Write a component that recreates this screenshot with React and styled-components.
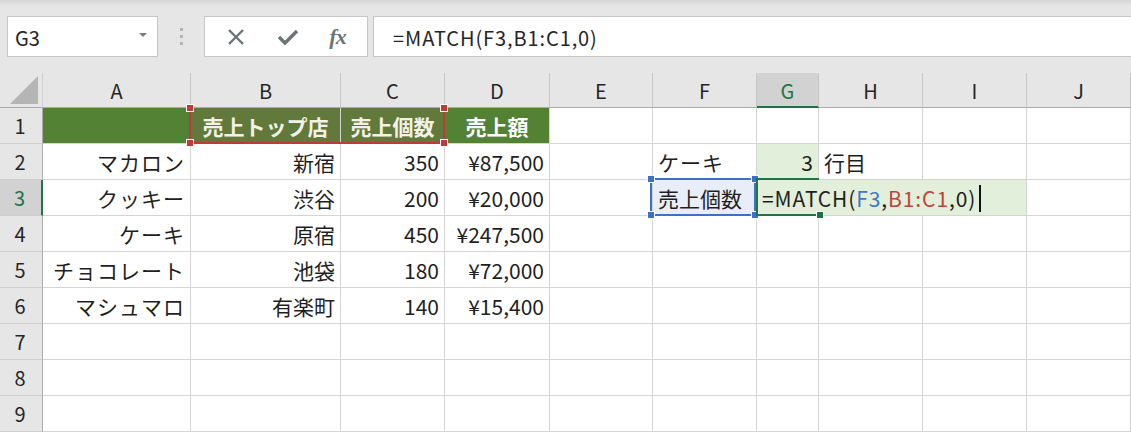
import React from "react";
import styled, { createGlobalStyle } from "styled-components";

const GlobalStyle = createGlobalStyle`
  html, body {
    margin: 0;
    padding: 0;
    background: #ffffff;
    overflow: hidden;
  }
  body {
    font-family: "Noto Sans CJK JP", "Noto Sans", sans-serif;
    color: #1f1f1f;
  }
`;

const FONT = `"Noto Sans CJK JP", "Noto Sans", sans-serif`;

const Wrap = styled.div`
  width: 1131px;
  height: 433px;
  overflow: hidden;
  background: #fff;
`;

/* ---------- formula bar ---------- */

const Toolbar = styled.div`
  height: 73px;
  box-sizing: border-box;
  padding-top: 16px;
  display: flex;
  align-items: flex-start;
  background: linear-gradient(#d4d4d4 0px, #e6e6e6 6px, #e6e6e6 100%);
`;

const NameBox = styled.div`
  margin-left: 7px;
  width: 151px;
  height: 41px;
  box-sizing: border-box;
  background: #fff;
  border: 1px solid #c6c6c6;
  display: flex;
  align-items: center;
  justify-content: space-between;
  padding: 2px 10px 0 7px;
  font-family: ${FONT};
  font-size: 20px;
  color: #262626;
`;

const DropArrow = styled.span`
  width: 0;
  height: 0;
  border-left: 4px solid transparent;
  border-right: 4px solid transparent;
  border-top: 4px solid #7a7a7a;
  margin-top: -6px;
`;

const Grip = styled.div`
  width: 46px;
  height: 41px;
  display: flex;
  flex-direction: column;
  align-items: center;
  justify-content: center;
  gap: 4px;
  span {
    width: 3px;
    height: 3px;
    background: #b3b3b3;
  }
`;

const FxBox = styled.div`
  width: 164px;
  height: 41px;
  box-sizing: border-box;
  background: #fff;
  border: 1px solid #c6c6c6;
  display: flex;
  align-items: center;
  justify-content: space-around;
  padding: 0 6px;
  color: #6a7676;
`;

const FxText = styled.span`
  font-family: "Liberation Serif", serif;
  font-style: italic;
  font-weight: bold;
  font-size: 22px;
  color: #6a7676;
  letter-spacing: -1px;
`;

const FormulaInput = styled.div`
  flex: 1;
  margin-left: 5px;
  height: 41px;
  box-sizing: border-box;
  background: #fff;
  border: 1px solid #c6c6c6;
  border-right: none;
  display: flex;
  align-items: center;
  padding: 1px 0 0 19px;
  font-family: ${FONT};
  font-size: 20px;
  color: #262626;
  letter-spacing: 0.9px;
`;

/* ---------- sheet ---------- */

const Sheet = styled.div`
  display: grid;
  grid-template-columns: 43px 148px 150px 104px 105px 103px 104px 62px 104px 104px 1fr;
  grid-template-rows: 35px repeat(9, 36px);
  font-family: ${FONT};
  font-size: 21px;
`;

const Corner = styled.div`
  background: #e6e6e6;
  border-right: 1px solid #d0d0d0;
  border-bottom: 1px solid #ababab;
  box-sizing: border-box;
  display: flex;
  align-items: flex-end;
  justify-content: flex-end;
  padding: 0 4px 3px 0;
`;

const ColHead = styled.div`
  background: ${(p) => (p.$active ? "#d2d2d2" : "#e6e6e6")};
  color: ${(p) => (p.$active ? "#217346" : "#262626")};
  border-right: 1px solid #c6c6c6;
  border-bottom: ${(p) => (p.$active ? "2px solid #217346" : "1px solid #ababab")};
  box-sizing: border-box;
  display: flex;
  align-items: center;
  justify-content: center;
  font-size: 20px;
  padding-top: ${(p) => (p.$active ? "1px" : "0")};
`;

const RowHead = styled.div`
  background: ${(p) => (p.$active ? "#d2d2d2" : "#e6e6e6")};
  color: ${(p) => (p.$active ? "#217346" : "#262626")};
  border-right: ${(p) => (p.$active ? "2px solid #217346" : "1px solid #ababab")};
  border-bottom: 1px solid #cfcfcf;
  box-sizing: border-box;
  display: flex;
  align-items: center;
  justify-content: center;
  font-size: 20px;
  padding-right: 2px;
`;

const Cell = styled.div`
  position: relative;
  box-sizing: border-box;
  border-right: 1px solid #d4d4d4;
  border-bottom: 1px solid #d4d4d4;
  background: ${(p) => p.$fill || "#fff"};
  color: ${(p) => p.$color || "#1f1f1f"};
  font-weight: ${(p) => (p.$bold ? 700 : 400)};
  display: flex;
  align-items: center;
  justify-content: ${(p) =>
    p.$align === "right" ? "flex-end" : p.$align === "center" ? "center" : "flex-start"};
  padding: 1px 5px 0 5px;
  white-space: nowrap;
  letter-spacing: ${(p) => (p.$kana ? "1px" : "0")};
`;

const Group = styled.div`
  position: relative;
  grid-column: ${(p) => p.$cols};
  display: grid;
  grid-template-columns: ${(p) => p.$template};
`;

const EditCell = styled.div`
  position: relative;
  grid-column: 8 / 11;
  box-sizing: border-box;
  background: #e2efda;
  border-right: 1px solid #d4d4d4;
  border-bottom: 1px solid #d4d4d4;
  display: flex;
  align-items: center;
  padding: 1px 0 0 5px;
  white-space: nowrap;
  color: #1f1f1f;
  letter-spacing: 0.9px;
`;

const Ref = styled.span`
  color: ${(p) => p.$color};
`;

const Caret = styled.span`
  display: inline-block;
  width: 2px;
  height: 27px;
  background: #111;
  margin-left: 3px;
`;

/* overlay frames for selections and formula references */
const Frame = styled.div`
  position: absolute;
  top: ${(p) => p.$top ?? -1}px;
  left: ${(p) => p.$left ?? -2}px;
  width: ${(p) => p.$w}px;
  height: ${(p) => p.$h}px;
  box-sizing: border-box;
  border: 2px solid ${(p) => p.$color};
  ${(p) => (p.$noTop ? "border-top-color: transparent;" : "")}
  ${(p) => (p.$noRight ? "border-right: none;" : "")}
  pointer-events: none;
  z-index: 2;
`;

const Handle = styled.span`
  position: absolute;
  width: 6px;
  height: 6px;
  background: ${(p) => p.$color};
  border: 1px solid #fff;
  ${(p) => (p.$y === "top" ? "top: -5px;" : "bottom: -5px;")}
  ${(p) => (p.$x === "left" ? "left: -5px;" : "right: -5px;")}
`;

const Handles = ({ color, corners }) =>
  corners.map((c) => {
    const [y, x] = c.split("-");
    return <Handle key={c} $color={color} $x={x} $y={y} />;
  });

const GREEN = "#548235";
const OLIVE = "#617a3b";

const cols = ["A", "B", "C", "D", "E", "F", "G", "H", "I", "J"];

const data = [
  ["マカロン", "新宿", "350", "¥87,500"],
  ["クッキー", "渋谷", "200", "¥20,000"],
  ["ケーキ", "原宿", "450", "¥247,500"],
  ["チョコレート", "池袋", "180", "¥72,000"],
  ["マシュマロ", "有楽町", "140", "¥15,400"],
];

const blanks = (n, key) =>
  Array.from({ length: n }, (_, i) => <Cell key={`${key}-${i}`} />);

export default function App() {
  return (
    <Wrap>
      <GlobalStyle />
      <Toolbar>
        <NameBox>
          G3
          <DropArrow />
        </NameBox>
        <Grip>
          <span />
          <span />
          <span />
        </Grip>
        <FxBox>
          <svg width="20" height="20" viewBox="0 0 20 20">
            <path d="M3 3 L17 17 M17 3 L3 17" stroke="#6a7676" strokeWidth="2.4" fill="none" />
          </svg>
          <svg width="22" height="20" viewBox="0 0 22 20">
            <path d="M2 10 L8 16 L20 4" stroke="#6a7676" strokeWidth="3.4" fill="none" />
          </svg>
          <FxText>fx</FxText>
        </FxBox>
        <FormulaInput>=MATCH(F3,B1:C1,0)</FormulaInput>
      </Toolbar>

      <Sheet>
        <Corner>
          <svg width="28" height="28" viewBox="0 0 28 28">
            <polygon points="0,28 28,28 28,0" fill="#b5b5b5" />
          </svg>
        </Corner>
        {cols.map((c) => (
          <ColHead key={c} $active={c === "G"}>
            {c}
          </ColHead>
        ))}

        {/* row 1 */}
        <RowHead>1</RowHead>
        <Cell $fill={GREEN} />
        <Group $cols="3 / 5" $template="150px 104px">
          <Cell $fill={OLIVE} $color="#f4f1ea" $bold $align="center">
            売上トップ店
          </Cell>
          <Cell $fill={OLIVE} $color="#f4f1ea" $bold $align="center">
            売上個数
          </Cell>
          <Frame $color="#c0393b" $w={256} $h={37} $noTop>
            <Handles color="#c0393b" corners={["top-left", "top-right", "bottom-left", "bottom-right"]} />
          </Frame>
        </Group>
        <Cell $fill={GREEN} $color="#ffffff" $bold $align="center">
          売上額
        </Cell>
        {blanks(6, "r1")}

        {/* rows 2..6 */}
        {data.map((r, i) => {
          const row = i + 2;
          return (
            <React.Fragment key={row}>
              <RowHead $active={row === 3}>{row}</RowHead>
              <Cell $align="right" $kana>
                {r[0]}
              </Cell>
              <Cell $align="right">{r[1]}</Cell>
              <Cell $align="right">{r[2]}</Cell>
              <Cell $align="right">{r[3]}</Cell>
              <Cell />
              {row === 2 && (
                <>
                  <Cell $kana>ケーキ</Cell>
                  <Cell $fill="#e2efda" $align="right">
                    3
                  </Cell>
                  <Cell>行目</Cell>
                  {blanks(2, "r2")}
                </>
              )}
              {row === 3 && (
                <>
                  <Cell $fill="#e8eef8">
                    売上個数
                    <Frame $color="#3f70c6" $w={106} $h={38} $top={-2} $left={-3}>
                      <Handles
                        color="#3f70c6"
                        corners={["top-left", "top-right", "bottom-left", "bottom-right"]}
                      />
                    </Frame>
                  </Cell>
                  <EditCell>
                    =MATCH(<Ref $color="#3f78c8">F3</Ref>,<Ref $color="#c0433a">B1:C1</Ref>,0)
                    <Caret />
                    <Frame $color="#217346" $w={63} $h={38} $top={-2} $left={-1} $noRight>
                      <Handles color="#217346" corners={["bottom-right"]} />
                    </Frame>
                  </EditCell>
                  <Cell />
                </>
              )}
              {row > 3 && blanks(5, `r${row}`)}
            </React.Fragment>
          );
        })}

        {/* rows 7..9 */}
        {[7, 8, 9].map((row) => (
          <React.Fragment key={row}>
            <RowHead>{row}</RowHead>
            {blanks(10, `r${row}`)}
          </React.Fragment>
        ))}
      </Sheet>
    </Wrap>
  );
}
